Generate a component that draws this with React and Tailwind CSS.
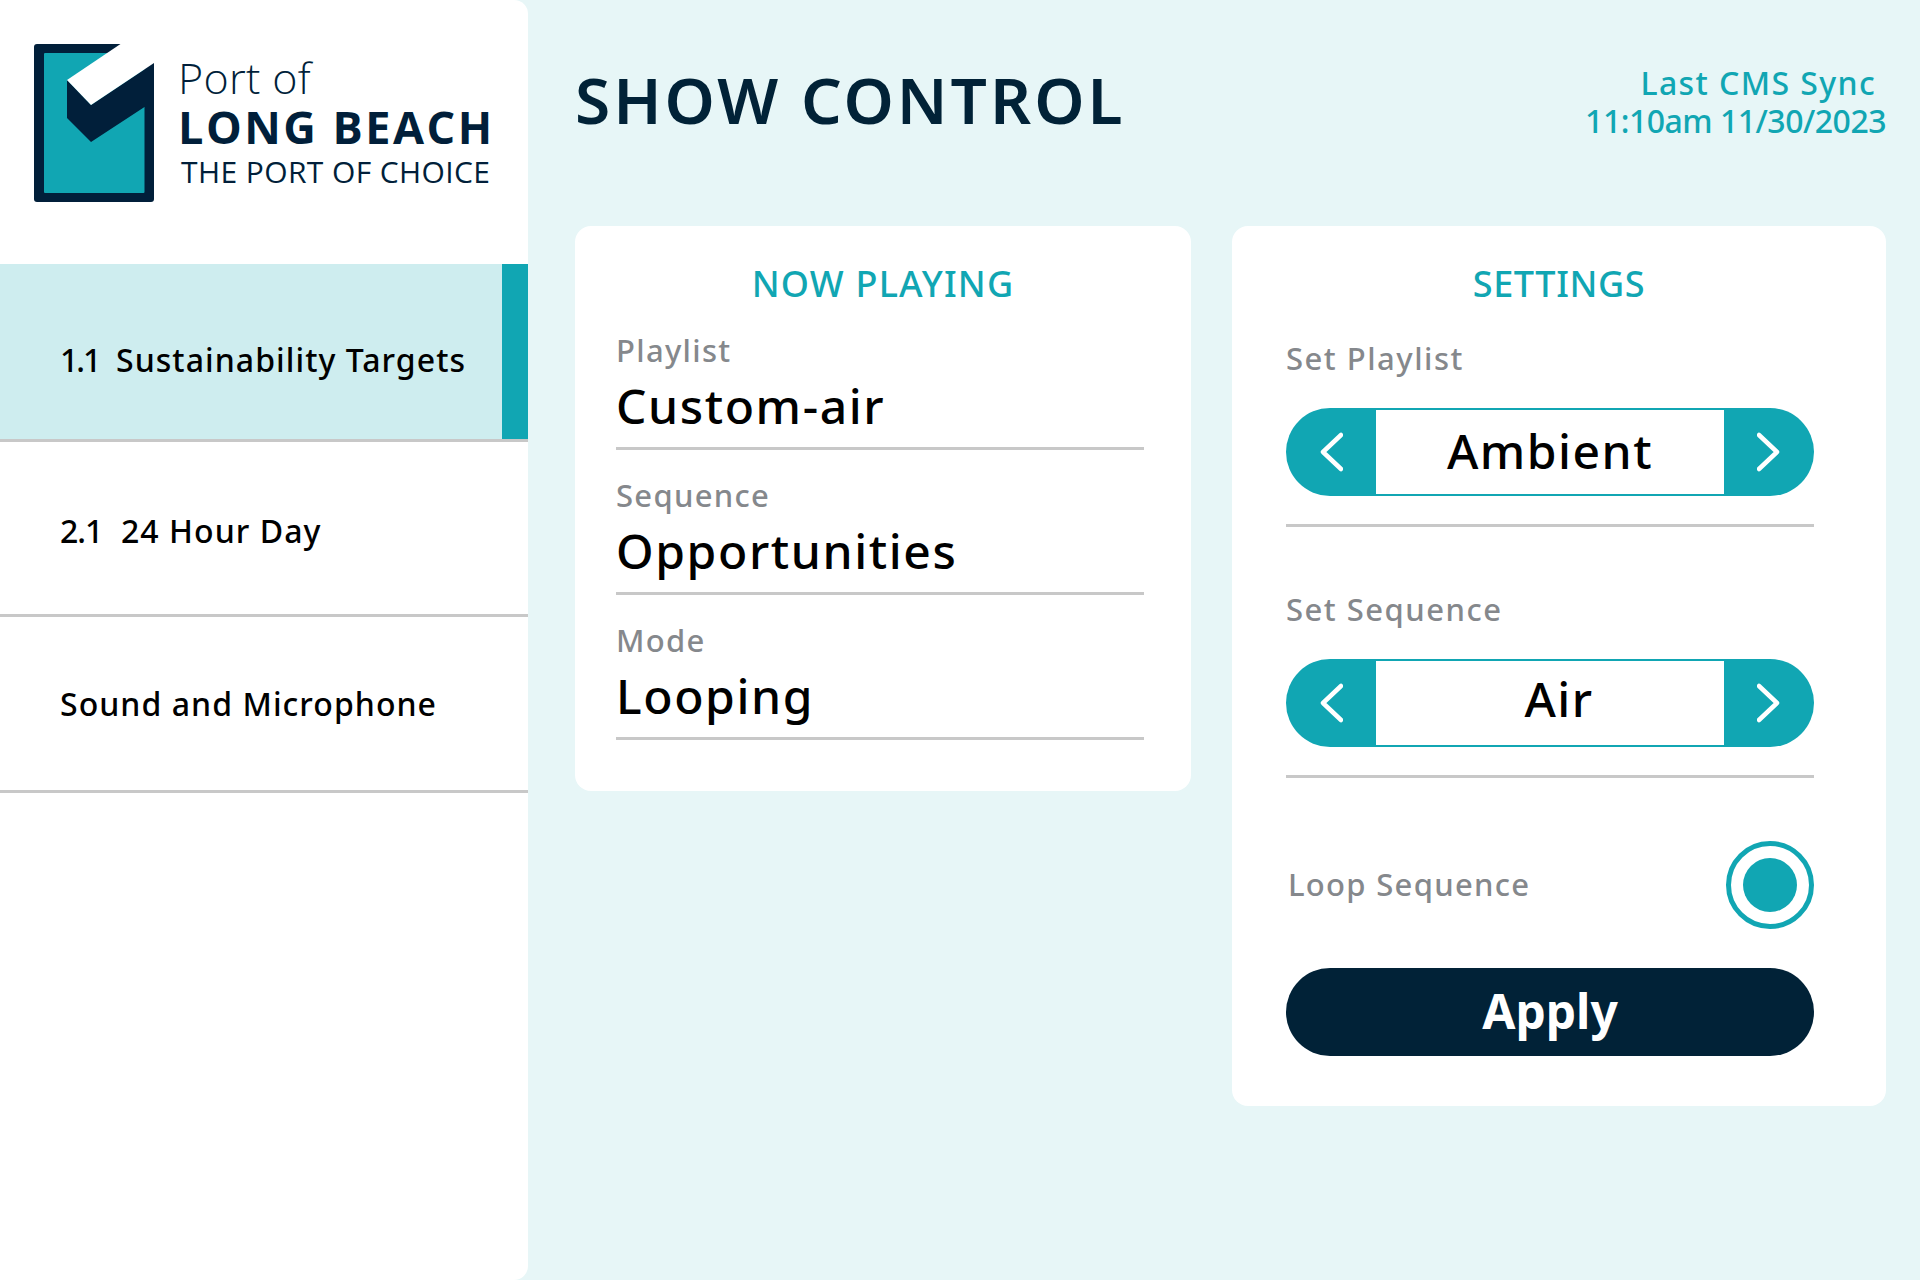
const font = "font-['Noto_Sans',sans-serif]"

function Logo() {
  return (
    <div className="flex h-[264px] items-start gap-[24px] pl-[34px] pt-[44px]">
      <svg width="120" height="158" viewBox="0 0 120 158" className="shrink-0">
        <path d="M3 0H117a3 3 0 0 1 3 3V155a3 3 0 0 1-3 3H3a3 3 0 0 1-3-3V3a3 3 0 0 1 3-3Z" fill="#011f3a" />
        <rect x="10" y="9" width="100.5" height="140" rx="1" fill="#11a6b3" />
        <path d="M33 36 57 61 120 19V63H110.5L57 98 33 74Z" fill="#011f3a" />
        <path d="M86.5 0 33 36 57 61 120 19V0Z" fill="#fff" />
      </svg>
      <div className="flex flex-col pt-[9px] font-['Open_Sans',sans-serif] text-[#011f3a]">
        <span className="h-[49px] text-[43px] leading-[50px] font-light tracking-[0.3px]">Port of</span>
        <span className="h-[50px] text-[45px] leading-[49px] font-bold tracking-[2.5px] whitespace-nowrap">LONG BEACH</span>
        <span className="pl-[3px] text-[30px] leading-[40px] tracking-[0.4px] whitespace-nowrap">THE PORT OF CHOICE</span>
      </div>
    </div>
  )
}

function NavItem({ num, numClass, label, active, height, offset }) {
  return (
    <div className={`flex items-center justify-between border-b-[3px] border-[#c8c8c8] ${height} ${active ? "bg-[#ceedef]" : "bg-white"}`}>
      <span className={`flex pl-[60px] text-[32px] font-medium tracking-[1.05px] whitespace-pre text-black ${offset}`}>
        {num && <span className={numClass}>{num}</span>}
        {label}
      </span>
      {active && <div className="h-full w-[26px] bg-[#11a6b3]" />}
    </div>
  )
}

function Field({ label, value }) {
  return (
    <div className="flex h-[145px] flex-col justify-end border-b-[3px] border-[#c8c8c8] pb-[11px]">
      <span className="text-[31px] leading-[40px] font-medium tracking-[1.3px] text-[#85888c]">{label}</span>
      <span className="mt-[6px] text-[48px] leading-[60px] font-medium tracking-[1.6px] text-black">{value}</span>
    </div>
  )
}

function Chevron({ dir }) {
  return (
    <svg width="24" height="40" viewBox="0 0 24 40" fill="none" stroke="#fff" strokeWidth="4.5" strokeLinecap="round" strokeLinejoin="round">
      <path d={dir === "left" ? "M22 3 4 20 22 37" : "M2 3 20 20 2 37"} />
    </svg>
  )
}

function Stepper({ value, extra }) {
  return (
    <div className="flex h-[88px] overflow-hidden rounded-full bg-[#11a6b3]">
      <div className="flex w-[90px] items-center justify-center"><Chevron dir="left" /></div>
      <div className={`my-[2px] flex flex-1 items-center justify-center bg-white text-[48px] font-medium tracking-[1.5px] text-black ${extra}`}>{value}</div>
      <div className="flex w-[90px] items-center justify-center"><Chevron dir="right" /></div>
    </div>
  )
}

export default function App() {
  return (
    <div className={`flex h-[1280px] w-[1920px] bg-[#e7f6f7] ${font}`}>
      <aside className="h-full w-[528px] shrink-0 rounded-r-[14px] bg-white">
        <Logo />
        <nav className="overflow-hidden">
          <NavItem num="1.1" numClass="w-[56px] tracking-[-2px]" label="Sustainability Targets" active height="h-[178px]" offset="pt-[16px]" />
          <NavItem num="2.1" numClass="w-[61px] tracking-[-1px]" label="24 Hour Day" height="h-[175px]" offset="pt-[6px]" />
          <NavItem label="Sound and Microphone" height="h-[176px]" />
        </nav>
      </aside>

      <main className="flex-1 pl-[47px] pr-[34px]">
        <header className="flex h-[226px] items-start justify-between">
          <h1 className="pt-[56px] text-[64px] leading-[88px] font-semibold tracking-[3px] text-[#012237]">SHOW CONTROL</h1>
          <div className="flex flex-col items-end pt-[64px] text-[32px] leading-[38px] font-medium text-[#11a6b3]">
            <span className="pr-[10px] tracking-[1.4px]">Last CMS Sync</span>
            <span className="tracking-[-0.5px]">11:10am 11/30/2023</span>
          </div>
        </header>

        <div className="flex items-start gap-[41px]">
          <section className="h-[565px] w-[616px] rounded-[16px] bg-white pl-[41px] pr-[47px]">
            <h2 className="pt-[36px] pl-[6px] text-center text-[36px] leading-[44px] font-medium tracking-[1.2px] text-[#11a6b3]">NOW PLAYING</h2>
            <div className="mt-[-1px] flex flex-col">
              <Field label="Playlist" value="Custom-air" />
              <Field label="Sequence" value="Opportunities" />
              <Field label="Mode" value="Looping" />
            </div>
          </section>

          <section className="h-[880px] w-[654px] rounded-[16px] bg-white pl-[54px] pr-[72px]">
            <h2 className="pt-[36px] pl-[18px] text-center text-[36px] leading-[44px] font-medium tracking-[0.6px] text-[#11a6b3]">SETTINGS</h2>
            <p className="mt-[32px] text-[31px] leading-[40px] font-medium tracking-[1.5px] text-[#85888c]">Set Playlist</p>
            <div className="mt-[30px]"><Stepper value="Ambient" extra="pb-[2px]" /></div>
            <div className="mt-[28px] h-[3px] bg-[#c8c8c8]" />
            <p className="mt-[62px] text-[31px] leading-[40px] font-medium tracking-[1.5px] text-[#85888c]">Set Sequence</p>
            <div className="mt-[30px]"><Stepper value="Air" extra="pb-[8px] pl-[18px]" /></div>
            <div className="mt-[28px] h-[3px] bg-[#c8c8c8]" />
            <div className="mt-[63px] flex items-center justify-between">
              <span className="pl-[2px] pb-[2px] text-[31px] font-medium tracking-[1.3px] text-[#85888c]">Loop Sequence</span>
              <div className="flex h-[88px] w-[88px] items-center justify-center rounded-full border-[5px] border-[#11a6b3]">
                <div className="h-[54px] w-[54px] rounded-full bg-[#11a6b3]" />
              </div>
            </div>
            <button className="mt-[39px] h-[88px] w-full rounded-full bg-[#012237] pb-[2px] text-[48px] font-bold text-white">Apply</button>
          </section>
        </div>
      </main>
    </div>
  )
}
